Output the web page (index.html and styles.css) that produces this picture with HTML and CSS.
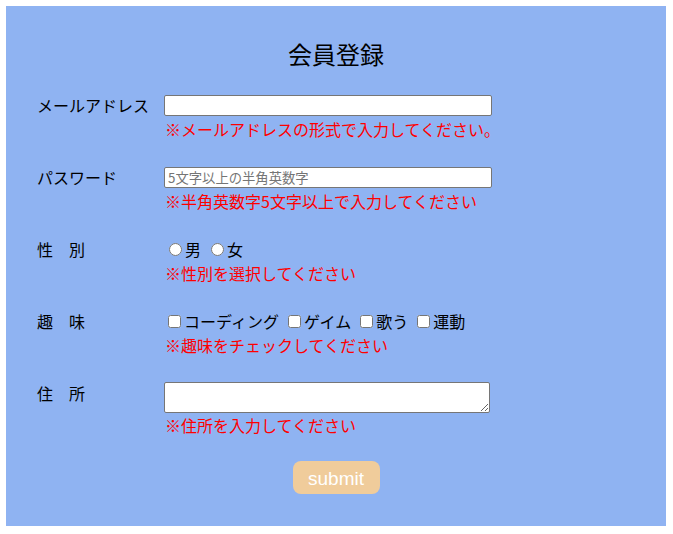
FILE: index.html
```html
<!DOCTYPE html>
<html lang="ja">
<head>
<meta charset="utf-8">
<title>会員登録</title>
<link rel="stylesheet" href="styles.css">
</head>
<body>
<form class="card">
  <h1 class="title">会員登録</h1>

  <div class="row">
    <div class="label">メールアドレス</div>
    <div class="field">
      <div class="control"><input class="text" type="text"></div>
      <div class="error">※メールアドレスの形式で入力してください。</div>
    </div>
  </div>

  <div class="row">
    <div class="label">パスワード</div>
    <div class="field">
      <div class="control"><input class="text" type="password" placeholder="5文字以上の半角英数字"></div>
      <div class="error">※半角英数字5文字以上で入力してください</div>
    </div>
  </div>

  <div class="row">
    <div class="label">性　別</div>
    <div class="field">
      <div class="control choices">
        <label class="choice"><input class="radio" type="radio" name="sex">男</label>
        <label class="choice"><input class="radio" type="radio" name="sex">女</label>
      </div>
      <div class="error">※性別を選択してください</div>
    </div>
  </div>

  <div class="row">
    <div class="label">趣　味</div>
    <div class="field">
      <div class="control choices">
        <label class="choice"><input class="check" type="checkbox">コーディング</label>
        <label class="choice"><input class="check" type="checkbox">ゲイム</label>
        <label class="choice"><input class="check" type="checkbox">歌う</label>
        <label class="choice"><input class="check" type="checkbox">運動</label>
      </div>
      <div class="error">※趣味をチェックしてください</div>
    </div>
  </div>

  <div class="row">
    <div class="label">住　所</div>
    <div class="field">
      <div class="control area-line"><textarea class="area"></textarea></div>
      <div class="error">※住所を入力してください</div>
    </div>
  </div>

  <div class="actions">
    <button class="submit" type="button">submit</button>
  </div>
</form>
</body>
</html>
```

FILE: styles.css
```css
html, body {
  margin: 0;
  padding: 0;
  background: #ffffff;
}

body {
  padding: 6px;
  font-family: "Noto Sans CJK JP", "Liberation Sans", sans-serif;
  color: #000000;
}

.card {
  width: 660px;
  height: 520px;
  box-sizing: border-box;
  background: #8fb3f2;
  padding: 32px 0 0 31px;
}

.title {
  margin: 0 0 23px 0;
  padding-right: 31px;
  text-align: center;
  font-size: 24px;
  line-height: 32px;
  font-weight: normal;
}

.row {
  display: grid;
  grid-template-columns: 127px 1fr;
  margin-bottom: 24px;
}

.label {
  font-size: 16px;
  line-height: 24px;
}

.field {
  display: flex;
  flex-direction: column;
}

.control {
  height: 24px;
  display: flex;
  align-items: center;
}

.text {
  box-sizing: border-box;
  width: 328px;
  height: 21px;
  margin: 0;
  padding: 1px 3px;
  border: 1px solid #767676;
  border-radius: 2px;
  background: #ffffff;
  font-family: "Noto Sans CJK JP", "Liberation Sans", sans-serif;
  font-size: 13.33px;
}

.text::placeholder {
  color: #757575;
}

.choices {
  font-size: 16px;
  line-height: 24px;
  gap: 5px;
}

.choice {
  display: flex;
  align-items: center;
}

.radio {
  width: 13px;
  height: 13px;
  margin: 0 3px 0 5px;
}

.check {
  width: 13px;
  height: 13px;
  margin: 0 3px 0 4px;
}

.area-line {
  height: auto;
  padding-top: 1px;
}

.area {
  box-sizing: border-box;
  width: 326px;
  height: 31px;
  margin: 0;
  border: 1px solid #767676;
  border-radius: 2px;
  background: #ffffff;
  font-size: 13.33px;
}

.error {
  color: #ff0000;
  font-size: 16px;
  line-height: 24px;
  padding-left: 1px;
}

.row:last-of-type {
  margin-bottom: 26px;
}

.actions {
  display: flex;
  justify-content: center;
  padding-right: 31px;
}

.submit {
  width: 87px;
  height: 33px;
  border: none;
  border-radius: 8px;
  background: #f0cc9b;
  color: #ffffff;
  font-family: "Liberation Sans", Arial, sans-serif;
  font-size: 19px;
  padding: 2px 0 0 0;
}
```
